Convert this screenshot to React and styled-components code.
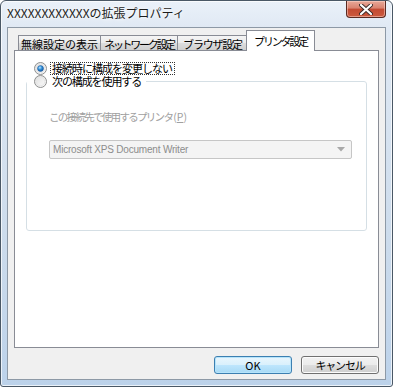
import React from "react";
import styled, { createGlobalStyle } from "styled-components";

const Global = createGlobalStyle`
	html, body { margin: 0; padding: 0; background: #ffffff; }
	* { box-sizing: border-box; }
`;

const JP = `"Noto Sans CJK JP", "DejaVu Sans", sans-serif`;

const Window = styled.div`
	width: 393px;
	height: 387px;
	display: flex;
	flex-direction: column;
	border: 1px solid #4a5866;
	border-radius: 6px 6px 3px 3px;
	background: linear-gradient(180deg, #eaf1f9 0px, #e0e9f4 26px, #cddcec 60%, #bcd2ea 100%);
	box-shadow: inset 0 0 0 1px rgba(255,255,255,0.7);
	overflow: hidden;
`;

const TitleBar = styled.div`
	height: 26px;
	flex: none;
	display: flex;
	justify-content: space-between;
	align-items: flex-start;
`;

const Title = styled.div`
	font-family: ${JP};
	font-size: 12px;
	color: #1c1c1c;
	padding: 4px 0 0 6px;
	line-height: 16px;
	text-shadow: 0 0 6px #ffffff, 0 0 3px #ffffff;
`;

const CloseBtn = styled.div`
	width: 40px;
	height: 17px;
	margin-right: 6px;
	border: 1px solid #5a2a22;
	border-top: none;
	border-radius: 0 0 4px 4px;
	background: linear-gradient(180deg, #e8a898 0%, #d9826f 45%, #c34a32 50%, #cc5a3e 100%);
	box-shadow: inset 0 0 0 1px rgba(255,220,210,0.5);
	display: flex;
	align-items: center;
	justify-content: center;
`;

const Client = styled.div`
	flex: 1;
	margin: 0 6px 6px 6px;
	background: #f0f0f0;
	border: 1px solid #8d99a6;
	display: flex;
	flex-direction: column;
	padding: 3px 6px 0 6px;
`;

const TabStrip = styled.div`
	display: flex;
	align-items: flex-end;
	height: 20px;
	padding-left: 4px;
	position: relative;
	z-index: 1;
	margin-bottom: -1px;
`;

const Tab = styled.div`
	width: ${p => p.w}px;
	height: ${p => (p.active ? 21 : 16)}px;
	margin-left: ${p => (p.active ? -2 : 0)}px;
	margin-right: ${p => (p.active ? -2 : 0)}px;
	border: 1px solid #898c95;
	border-bottom: ${p => (p.active ? "none" : "1px solid #898c95")};
	border-left: ${p => (p.first || p.active ? "1px solid #898c95" : "none")};
	background: ${p => (p.active ? "#ffffff" : "linear-gradient(180deg, #f5f5f5 0%, #ebebeb 50%, #dddddd 51%, #cfcfcf 100%)")};
	font-family: ${JP};
	font-size: 11px;
	letter-spacing: ${p => p.ls || 0}px;
	color: #000;
	line-height: 14px;
	display: flex;
	justify-content: center;
	align-items: flex-start;
	padding-top: ${p => (p.active ? 3 : 1)}px;
	white-space: nowrap;
	position: relative;
	z-index: ${p => (p.active ? 2 : 1)};
`;

const Panel = styled.div`
	height: 298px;
	background: #ffffff;
	border: 1px solid #898c95;
	padding: 10px 11px 0 11px;
	display: flex;
	flex-direction: column;
`;

const RadioRow = styled.label`
	display: flex;
	align-items: center;
	gap: 3px;
	padding-left: ${p => p.indent}px;
	height: 14px;
	font-family: ${JP};
	font-size: 11px;
	letter-spacing: ${p => p.ls}px;
	color: #000;
	line-height: 11px;
`;

const Caption = styled.span`
	height: 13px;
	padding: 0 2px 0 1px;
	border: 1px dotted ${p => (p.focus ? "#333" : "transparent")};
	white-space: nowrap;
`;

const Group = styled.fieldset`
	margin: 0;
	margin-top: -1px;
	height: 157px;
	border: 1px solid #d5dfe5;
	border-radius: 3px;
	padding: 22px 14px 0 22px;
	display: flex;
	flex-direction: column;
`;

const Legend = styled.legend`
	padding: 0 2px 0 0;
	margin-left: -22px;
	height: 14px;
`;

const FieldLabel = styled.div`
	font-family: ${JP};
	font-size: 10.5px;
	color: #a0a0a0;
	line-height: 14px;
	white-space: nowrap;
	u { text-decoration: underline; }
`;

const Tight = styled.span`
	letter-spacing: -1.7px;
	margin-right: 1px;
`;

const Combo = styled.div`
	margin-top: 16px;
	height: 19px;
	border: 1px solid #c6c6c6;
	border-radius: 2px;
	background: #f4f4f4;
	display: flex;
	align-items: center;
	justify-content: space-between;
	padding: 0 6px 0 3px;
	font-family: "Liberation Sans", Arial, sans-serif;
	font-size: 10px;
	letter-spacing: -0.2px;
	color: #8d8d8d;
`;

const ButtonBar = styled.div`
	flex: 1;
	display: flex;
	justify-content: flex-end;
	align-items: flex-start;
	gap: 9px;
	padding-top: 8px;
`;

const Button = styled.div`
	width: 78px;
	height: 18px;
	border: 1px solid ${p => (p.primary ? "#3c7fb1" : "#707070")};
	border-radius: 3px;
	background: ${p => (p.primary
		? "linear-gradient(180deg, #eaf6fd 0%, #d9f0fc 50%, #bee6fd 51%, #a7d9f5 100%)"
		: "linear-gradient(180deg, #f2f2f2 0%, #ebebeb 50%, #dddddd 51%, #cfcfcf 100%)")};
	box-shadow: inset 0 0 0 1px ${p => (p.primary ? "#b6e4fb" : "#fcfcfc")};
	font-family: ${JP};
	font-size: 11px;
	letter-spacing: ${p => p.ls || 0}px;
	color: #000;
	display: flex;
	align-items: center;
	justify-content: center;
	line-height: 14px;
`;

function Radio({ checked }) {
	return (
		<svg width="13" height="13" viewBox="0 0 13 13">
			<defs>
				<linearGradient id="rbg" x1="0" y1="0" x2="1" y2="1">
					<stop offset="0" stopColor="#dcdcdc" />
					<stop offset="1" stopColor="#ffffff" />
				</linearGradient>
				<radialGradient id="rdot" cx="0.4" cy="0.35" r="0.7">
					<stop offset="0" stopColor="#b9e4ff" />
					<stop offset="0.5" stopColor="#2a8ad4" />
					<stop offset="1" stopColor="#14509a" />
				</radialGradient>
			</defs>
			<circle cx="6.5" cy="6.5" r="6" fill="url(#rbg)" stroke="#8e8f8f" strokeWidth="1" />
			<circle cx="6.5" cy="6.5" r="4.3" fill="none" stroke="#e6e6e6" strokeWidth="1" />
			{checked && <circle cx="6.5" cy="6.5" r="3" fill="url(#rdot)" stroke="#1d5a9e" strokeWidth="0.5" />}
		</svg>
	);
}

export default function App() {
	return (
		<Window>
			<Global />
			<TitleBar>
				<Title>XXXXXXXXXXXXの拡張プロパティ</Title>
				<CloseBtn>
					<svg width="14" height="11" viewBox="0 0 14 11">
						<path d="M2 1 L12 10 M12 1 L2 10" stroke="#3a2a28" strokeWidth="4" strokeLinecap="round" />
						<path d="M2 1 L12 10 M12 1 L2 10" stroke="#ffffff" strokeWidth="2.2" strokeLinecap="round" />
					</svg>
				</CloseBtn>
			</TitleBar>
			<Client>
				<TabStrip>
					<Tab w={83} first>無線設定の表示</Tab>
					<Tab w={77} ls={-2.3}>ネットワーク設定</Tab>
					<Tab w={70} ls={-1.2}>ブラウザ設定</Tab>
					<Tab w={69} ls={-2.2} active>プリンタ設定</Tab>
				</TabStrip>
				<Panel>
					<RadioRow indent={8} ls={-1}>
						<Radio checked />
						<Caption focus>接続時に構成を変更しない</Caption>
					</RadioRow>
					<Group>
						<Legend>
							<RadioRow indent={7} ls={-1.1}>
								<Radio />
								<Caption>次の構成を使用する</Caption>
							</RadioRow>
						</Legend>
						<FieldLabel><Tight>この接続先で使用するプリンタ</Tight>(<u>P</u>)</FieldLabel>
						<Combo>
							<span>Microsoft XPS Document Writer</span>
							<svg width="8" height="5" viewBox="0 0 8 5">
								<path d="M0 0 H8 L4 4.5 Z" fill="#a8a8a8" />
							</svg>
						</Combo>
					</Group>
				</Panel>
				<ButtonBar>
					<Button primary>OK</Button>
					<Button ls={-1.2}>キャンセル</Button>
				</ButtonBar>
			</Client>
		</Window>
	);
}
